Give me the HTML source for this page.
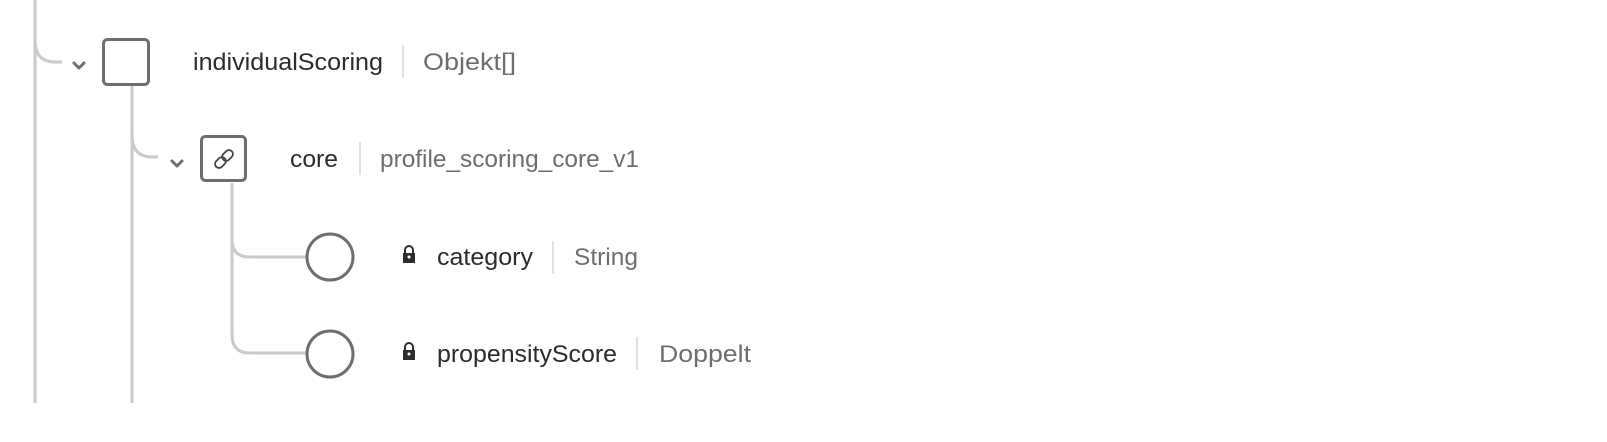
<!DOCTYPE html>
<html><head><style>html,body{margin:0;padding:0;background:#fff;width:1607px;height:442px;overflow:hidden}</style></head>
<body>
<svg width="1607" height="442" xmlns="http://www.w3.org/2000/svg" style="display:block;font-family:'Liberation Sans',sans-serif">
<g fill="none" stroke="#cacaca" stroke-width="3">
<path d="M35 0 V403"/>
<path d="M35 40 Q35 62 55 62 H62"/>
<path d="M132 86 V403"/>
<path d="M132 135 Q132 157 152 157 H158"/>
<path d="M232 183 V335 Q232 353 250 353 H307"/>
<path d="M232 240 Q232 257 250 257 H307"/>
</g>
<g fill="none" stroke="#6e6e6e" stroke-width="3" stroke-linecap="round" stroke-linejoin="round">
<path d="M74 63 L79 68 L84 63"/>
<path d="M172 161 L177 166 L182 161"/>
<rect x="103.5" y="39.5" width="45" height="45" rx="4"/>
<rect x="201.5" y="136.5" width="44" height="44" rx="4"/>
<circle cx="330" cy="257" r="23"/>
<circle cx="330" cy="354" r="23"/>
</g>
<g fill="none" stroke="#444" stroke-width="1.8" transform="rotate(-45 224 159)">
<rect x="213" y="155" width="12" height="8" rx="4"/>
<rect x="223" y="155" width="12" height="8" rx="4"/>
</g>
<g fill="#2c2c2c">
<path d="M405 253 v-3 a4 4 0 0 1 8 0 v3" stroke="#2c2c2c" stroke-width="2" fill="none"/>
<rect x="403" y="253" width="12" height="10"/>
<path d="M405 350 v-3 a4 4 0 0 1 8 0 v3" stroke="#2c2c2c" stroke-width="2" fill="none"/>
<rect x="403" y="350" width="12" height="10"/>
</g>
<circle cx="409" cy="257" r="1.5" fill="#fff"/>
<circle cx="409" cy="354" r="1.5" fill="#fff"/>
<g stroke="#d5d5d5" stroke-width="1.5">
<path d="M403 45 V78"/><path d="M360 142 V175"/><path d="M553 241 V274"/><path d="M637 337 V370"/>
</g>
<g font-size="24" fill="#2c2c2c">
<text x="193" y="70" textLength="190" lengthAdjust="spacingAndGlyphs">individualScoring</text>
<text x="290" y="167" textLength="48" lengthAdjust="spacingAndGlyphs">core</text>
<text x="437" y="265" textLength="96" lengthAdjust="spacingAndGlyphs">category</text>
<text x="437" y="362" textLength="180" lengthAdjust="spacingAndGlyphs">propensityScore</text>
</g>
<g font-size="24" fill="#6e6e6e">
<text x="423" y="70" textLength="93" lengthAdjust="spacingAndGlyphs">Objekt[]</text>
<text x="380" y="167" textLength="259" lengthAdjust="spacingAndGlyphs">profile_scoring_core_v1</text>
<text x="574" y="265" textLength="64" lengthAdjust="spacingAndGlyphs">String</text>
<text x="659" y="362" textLength="92" lengthAdjust="spacingAndGlyphs">Doppelt</text>
</g>
</svg>
</body></html>
